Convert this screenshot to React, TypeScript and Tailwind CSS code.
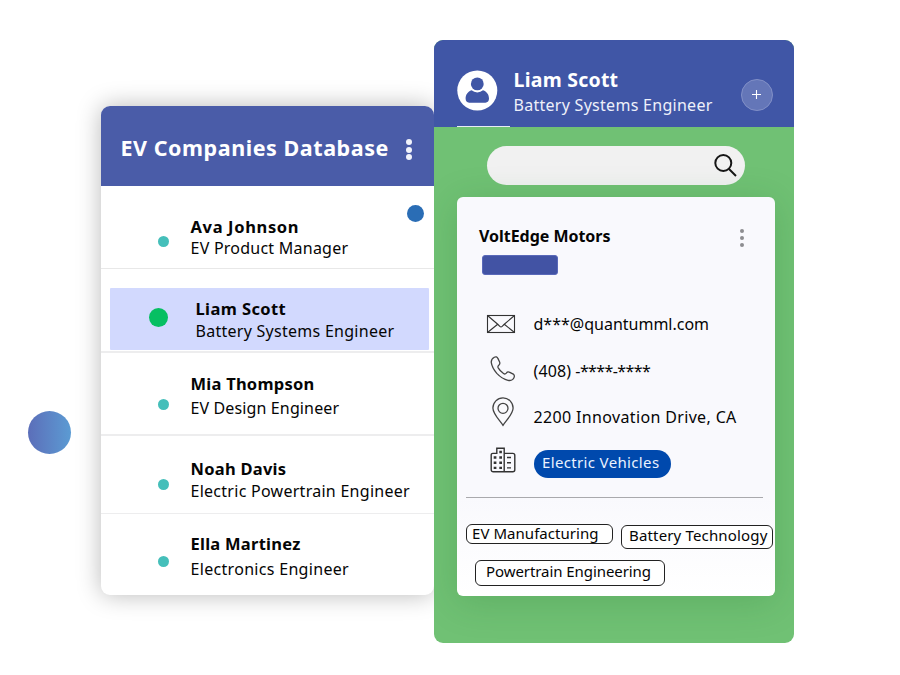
type Person = {
  name: string;
  role: string;
  row: string;
  dot: string;
  nameClass: string;
  roleClass: string;
};

const people: Person[] = [
  {
    name: "Mia Thompson",
    role: "EV Design Engineer",
    row: "h-[83px] pt-[21px] border-b-2",
    dot: "mt-[25px]",
    nameClass: "tracking-[0.24px]",
    roleClass: "mt-1 tracking-[0.13px]",
  },
  {
    name: "Noah Davis",
    role: "Electric Powertrain Engineer",
    row: "h-[78px] pt-[23px] border-b",
    dot: "mt-5",
    nameClass: "tracking-[0.26px]",
    roleClass: "mt-0.5 tracking-[0.27px]",
  },
  {
    name: "Ella Martinez",
    role: "Electronics Engineer",
    row: "h-[81px] pt-5",
    dot: "mt-[22px]",
    nameClass: "tracking-[0.26px]",
    roleClass: "mt-[5px] tracking-[0.31px]",
  },
];

function PersonRow({ name, role, row, dot, nameClass, roleClass }: Person) {
  return (
    <div className={`flex shrink-0 border-[#ededee] pl-[57px] ${row}`}>
      <span className={`size-[11px] shrink-0 rounded-full bg-[#45bfba] ${dot}`} />
      <div className="ml-[22px] whitespace-nowrap">
        <div className={`text-[16.5px] leading-5 font-bold ${nameClass}`}>{name}</div>
        <div className={`text-base leading-5 ${roleClass}`}>{role}</div>
      </div>
    </div>
  );
}

function Mail() {
  return (
    <svg width="30" height="20" viewBox="0 0 30 20" fill="none" stroke="#333" strokeWidth="1.1">
      <rect x="1.5" y="1.5" width="27" height="17" />
      <path d="M1.5 1.5 12 10.500l1.800 1.900q1.200.9 2.400 0L18 10.500 28.500 1.500M1.500 18.500 11.700 10.200M28.500 18.500 18.300 10.200" />
    </svg>
  );
}

function Phone() {
  return (
    <svg width="26" height="26" viewBox="0 0 26 26" fill="none" stroke="#444" strokeWidth="1.3" strokeLinejoin="round">
      <path d="M4.300 1.200C2.300 2.400.9 4 1.300 6.700c.5 3.300 2.300 7 5.500 10.700 3.300 3.500 7.200 6.100 11.200 6.900 2.900.6 5.400-.9 6.200-3.200.4-1.300.1-2.200-.9-3l-3.500-1.800c-1.400-.7-2.600-.5-3.500.8-.8 1-1.700 1.200-2.800.4-2.100-1.500-4-3.500-5.300-5.700-.6-1.100-.4-1.800.6-2.600 1.100-.9 1.300-1.900.8-3.200L7.900 2.400C7.200.8 5.800.4 4.300 1.200Z" />
    </svg>
  );
}

function Pin() {
  return (
    <svg width="24" height="30" viewBox="0 0 24 30" fill="none" stroke="#444" strokeWidth="1.3">
      <path d="M12 28.300C8.500 23.200 1.900 16.800 1.900 11a10.100 10.100 0 0 1 20.200 0c0 5.800-6.600 12.200-10.100 17.300Z" />
      <circle cx="12" cy="11.300" r="5" />
    </svg>
  );
}

function Building() {
  return (
    <svg width="26" height="26" viewBox="0 0 26 26" fill="none" stroke="#333" strokeWidth="1.4">
      <path d="M14.200 24.800H3.200a2 2 0 0 1-2-2V8a1.600 1.600 0 0 1 1.600-1.600h4V1.200h7.400v23.600h8.600a2 2 0 0 0 2-2V8.400a2 2 0 0 0-2-2h-8.600" />
      <path
        d="M9.300 5h2.600M3.700 10.500h2.700M9.300 10.500H12M3.700 15.700h2.700M9.300 15.700H12M3.700 20.900h2.700M9.300 20.900H12"
        strokeWidth="2.4"
      />
      <path d="M17 10.500h4M17 15.700h4M17 20.900h4" />
    </svg>
  );
}

function DatabasePanel() {
  return (
    <section className="mt-[106px] ml-[29.5px] flex h-[489px] w-[333.5px] shrink-0 flex-col rounded-[9px] bg-white shadow-[0_0_24px_rgba(0,0,0,0.28)]">
      <header className="flex h-20 shrink-0 items-center rounded-t-[9px] bg-[#4a5ca8] pl-[20px]">
        <h1 className="w-[283.5px] pt-[3px] text-[21.5px] leading-7 font-bold tracking-[0.55px] whitespace-nowrap text-white">
          EV Companies Database
        </h1>
        <div className="mt-[7px] flex flex-col gap-[1.5px] pl-[2px]">
          <span className="size-[6px] rounded-full bg-[#f1f3fb]" />
          <span className="size-[6px] rounded-full bg-[#f1f3fb]" />
          <span className="size-[6px] rounded-full bg-[#f1f3fb]" />
        </div>
      </header>

      <div className="flex h-[83px] shrink-0 border-b border-[#e8e8e8] pl-[57px]">
        <span className="mt-[50px] size-[11px] shrink-0 rounded-full bg-[#45bfba]" />
        <div className="ml-[22px] w-[216.5px] pt-[31px] whitespace-nowrap">
          <div className="text-[16.5px] leading-5 font-bold tracking-[0.65px]">Ava Johnson</div>
          <div className="mt-px text-base leading-5 tracking-[0.24px]">EV Product Manager</div>
        </div>
        <span className="mt-[19px] size-[17px] shrink-0 rounded-full bg-[#2a6db5]" />
      </div>

      <div className="h-[84px] shrink-0 border-b-2 border-[#ededee] pt-[18.5px] pr-[5px] pl-[9.5px]">
        <div className="flex h-[62px] rounded-[1px] bg-[#d2d9fe] pl-[39px]">
          <span className="mt-5 size-[19px] shrink-0 rounded-full bg-[#06bf62]" />
          <div className="ml-[27.5px] pt-[11px] whitespace-nowrap">
            <div className="text-[16.5px] leading-5 font-bold tracking-[0.4px]">Liam Scott</div>
            <div className="mt-0.5 text-base leading-5 tracking-[0.27px]">Battery Systems Engineer</div>
          </div>
        </div>
      </div>

      {people.map((p) => (
        <PersonRow key={p.name} {...p} />
      ))}
    </section>
  );
}

function ProfilePanel() {
  return (
    <section className="z-10 mt-10 flex h-[603px] w-[360px] shrink-0 flex-col overflow-hidden rounded-[9px] bg-[#70c174]">
      <header className="flex h-[87px] shrink-0 flex-col bg-[#4056a6]">
        <div className="flex h-[86px] pl-[23px]">
          <svg className="mt-[30px] shrink-0" width="41" height="41" viewBox="0 0 41 41">
            <circle cx="20.300" cy="20.500" r="20" fill="#fff" />
            <circle cx="20.300" cy="13.900" r="6.400" fill="#4056a6" />
            <path
              d="M14.600 20.300a8.600 8.600 0 0 0 11.400 0c3.800 1.300 6 4.400 6 8.300 0 2.600-1.300 4.100-3.600 4.100H12.200c-2.300 0-3.600-1.500-3.600-4.100 0-3.900 2.200-7 6-8.300Z"
              fill="#4056a6"
            />
          </svg>
          <div className="ml-[15.5px] w-[227.5px] pt-[30px] whitespace-nowrap text-white">
            <div className="text-[19.5px] leading-5 font-bold tracking-[0.24px]">Liam Scott</div>
            <div className="mt-[5px] text-base leading-5 tracking-[0.28px] text-[#eef0fa]">Battery Systems Engineer</div>
          </div>
          <div className="mt-[38.5px] flex size-[32px] items-center justify-center rounded-full border border-[#8290c7] bg-[#6476b8]">
            <svg className="mr-[2px] mb-px" width="9" height="9" viewBox="0 0 9 9" stroke="#fff" strokeWidth="1.1">
              <path d="M4.500 0v9M0 4.500h9" />
            </svg>
          </div>
        </div>
        <div className="ml-[23px] h-px w-[53px] bg-[#e8ebf7]" />
      </header>

      <div className="mt-[18.5px] ml-[53px] flex h-[39.5px] w-[258px] shrink-0 items-center justify-end rounded-full bg-[#f1f1f1] pr-[8px]">
        <svg width="24" height="24" viewBox="0 0 24 24" fill="none" stroke="#161616" strokeWidth="2">
          <circle cx="10.300" cy="10" r="8" />
          <path d="m16 16 7 7" />
        </svg>
      </div>

      <div className="mt-[12px] ml-[23px] flex h-[399px] w-[317.5px] shrink-0 flex-col rounded-[6px] bg-[linear-gradient(#f9f9fd_75%,#ffffff)] shadow-[0_6px_36px_rgba(30,110,40,0.22)]">
        <div className="flex shrink-0 justify-between pt-[29px] pr-[30.5px] pl-[22px]">
          <h2 className="text-base leading-5 font-bold tracking-[-0.03px] whitespace-nowrap">VoltEdge Motors</h2>
          <div className="mt-[2.5px] flex flex-col gap-[3px]">
            <span className="size-[4px] rounded-full bg-[#8d8d90]" />
            <span className="size-[4px] rounded-full bg-[#8d8d90]" />
            <span className="size-[4px] rounded-full bg-[#8d8d90]" />
          </div>
        </div>
        <div className="mt-[8px] ml-[25px] h-5 w-[75.5px] shrink-0 rounded-[3px] border border-[#5a69b9] bg-[#4253a4]" />

        <ul className="mt-[35.5px] ml-[29px] flex shrink-0 flex-col whitespace-nowrap">
          <li className="flex h-9">
            <span className="w-[47.5px] pt-[4px]"><Mail /></span>
            <span className="pt-1 text-base leading-5">d***@quantumml.com</span>
          </li>
          <li className="flex h-11">
            <span className="w-[47.5px] pt-[10px] pl-[3.5px]"><Phone /></span>
            <span className="pt-[15px] text-base leading-5 tracking-[0.1px]">
              (408) <span className="tracking-[-0.6px]">-****-****</span>
            </span>
          </li>
          <li className="flex h-11">
            <span className="w-[47.5px] pt-[7px] pl-[4.5px]"><Pin /></span>
            <span className="pt-[17px] text-base leading-5 tracking-[0.35px]">2200 Innovation Drive, CA</span>
          </li>
          <li className="flex h-[48px]">
            <span className="w-[47.5px] pt-[13px] pl-[4px]"><Building /></span>
            <span className="mt-[16px] h-[28px] w-[137.5px] rounded-full bg-[#0049ad] pl-[8.5px] text-[15px] leading-[25px] tracking-[0.35px] text-[#eaf2ff]">
              Electric Vehicles
            </span>
          </li>
        </ul>

        <div className="mt-[15px] ml-[9px] h-px w-[297px] shrink-0 bg-[#a9a9ad]" />

        <div className="mt-[26px] ml-[9px] flex shrink-0 items-start whitespace-nowrap text-[15px]">
          <span className="h-5 w-[147px] rounded-[6px] border border-[#222] bg-white pl-[5px] leading-[16px] tracking-[0.05px]">
            EV Manufacturing
          </span>
          <span className="mt-px ml-[8px] h-6 w-[152px] rounded-[6px] border border-[#222] bg-white pl-[7px] leading-[18px] tracking-[0.16px]">
            Battery Technology
          </span>
        </div>
        <span className="mt-[11px] ml-[18px] h-[26px] w-[190px] shrink-0 rounded-[6px] border border-[#222] bg-white pl-[10px] text-[15px] leading-[20px] tracking-[-0.07px] whitespace-nowrap">
          Powertrain Engineering
        </span>
      </div>
    </section>
  );
}

export default function App() {
  return (
    <main className="flex h-[675px] w-[900px] items-start overflow-hidden bg-white font-['Noto_Sans','Open_Sans',sans-serif] text-[#050505]">
      <div className="mt-[411px] ml-[28px] size-[43px] shrink-0 rounded-full bg-linear-to-r from-[#5b6eb9] to-[#5b9bd3]" />
      <DatabasePanel />
      <ProfilePanel />
    </main>
  );
}
